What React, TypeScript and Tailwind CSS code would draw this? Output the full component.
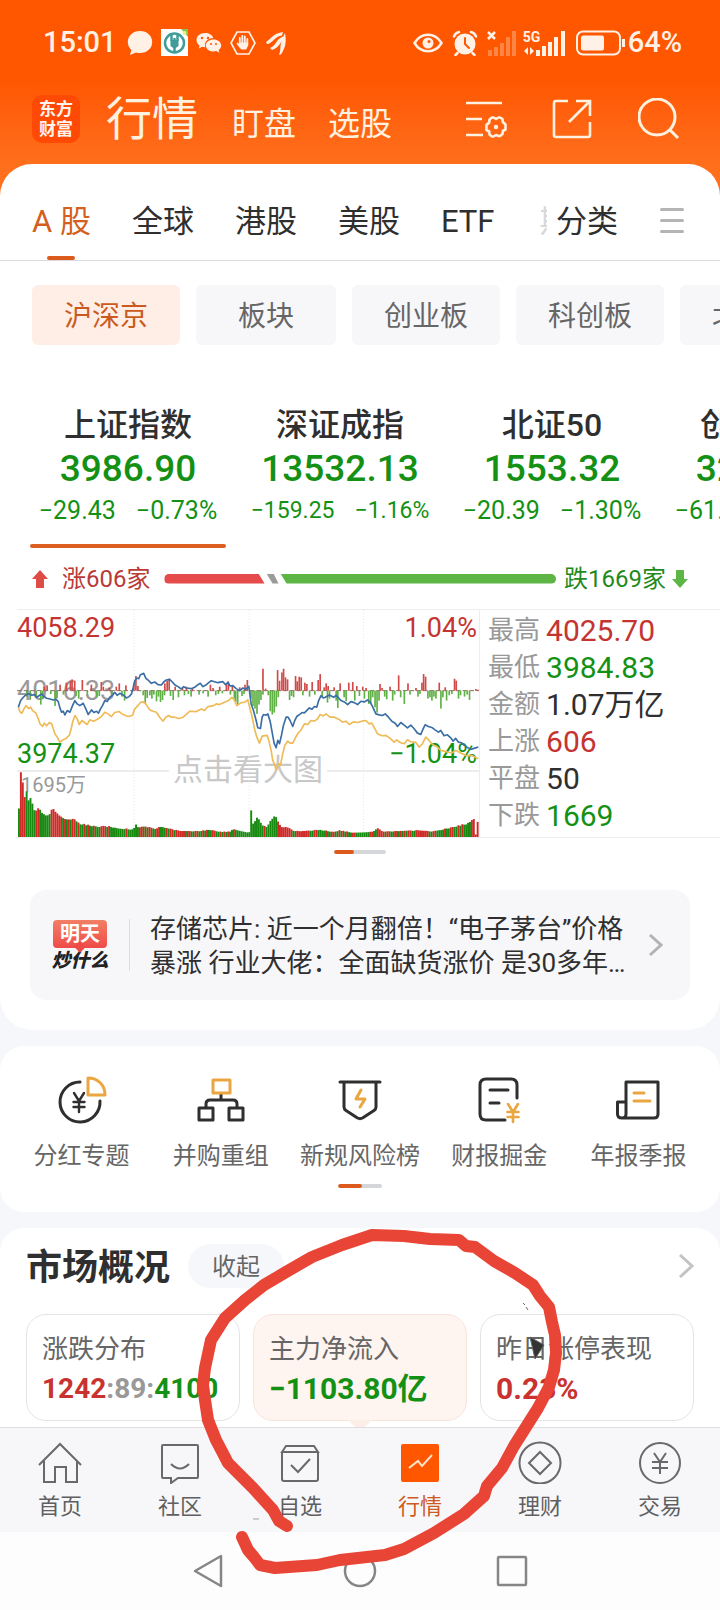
import React from 'react';
import { clsx } from 'clsx';

type Point = [number, number];

interface IndexQuote {
  name: string;
  value: string;
  change: string;
  percent: string;
}

const tabs = ['A 股', '全球', '港股', '美股', 'ETF'];
const boards = ['沪深京', '板块', '创业板', '科创板', '北交所'];

const indexes: IndexQuote[] = [
  { name: '上证指数', value: '3986.90', change: '−29.43', percent: '−0.73%' },
  { name: '深证成指', value: '13532.13', change: '−159.25', percent: '−1.16%' },
  { name: '北证50', value: '1553.32', change: '−20.39', percent: '−1.30%' },
  { name: '创业板指', value: '3263.02', change: '−61.22', percent: '−1.84%' },
];

const stats = [
  { label: '最高', value: '4025.70', color: 'text-[#c43431]' },
  { label: '最低', value: '3984.83', color: 'text-[#149114]' },
  { label: '金额', value: '1.07万亿', color: 'text-[#2f2f2f]' },
  { label: '上涨', value: '606', color: 'text-[#c43431]' },
  { label: '平盘', value: '50', color: 'text-[#2f2f2f]' },
  { label: '下跌', value: '1669', color: 'text-[#149114]' },
];

// Chart space: x 51..1440, y 27..711
const priceLine =
  '55,320 62,300 70,290 75,285 85,279 95,284 103,282 110,290 125,280 133,288 140,293 150,295 160,298 168,296 175,303 180,322 185,335 190,332 195,343 202,330 210,335 218,315 225,300 232,310 240,315 250,308 258,325 265,342 275,328 282,336 290,332 296,338 302,325 308,315 315,300 322,303 330,290 338,284 345,275 352,284 360,278 370,283 380,292 388,288 395,280 400,262 405,240 412,232 417,234 422,222 432,218 438,232 445,238 455,248 465,244 475,252 485,253 492,244 500,238 510,236 518,244 525,252 535,258 545,265 552,258 560,262 575,264 585,260 595,252 602,248 610,258 620,252 635,240 645,243 655,246 670,243 678,252 685,245 692,256 700,255 710,264 720,270 730,262 738,266 748,257 755,310 762,330 770,360 775,382 783,384 788,350 792,342 800,344 805,340 812,362 818,395 824,428 830,442 835,420 840,430 846,405 852,375 860,350 866,350 872,360 880,378 886,360 892,348 900,342 908,336 915,337 922,330 930,322 938,326 945,318 952,320 958,300 965,285 972,292 978,290 990,283 1003,290 1010,284 1018,292 1025,300 1035,304 1045,312 1055,303 1065,306 1075,312 1085,302 1095,304 1105,298 1113,305 1120,318 1130,340 1140,343 1150,345 1158,340 1168,350 1178,362 1188,368 1195,378 1205,366 1215,374 1225,382 1235,374 1245,385 1255,398 1265,402 1272,385 1278,373 1288,378 1300,382 1308,388 1318,395 1325,390 1335,406 1345,403 1355,412 1362,422 1370,414 1378,425 1388,427 1395,434 1405,441 1415,447 1425,444 1438,440';
const averageLine =
  '55,320 60,334 66,338 72,325 78,315 86,324 92,320 98,330 108,338 115,355 120,370 128,378 133,368 140,376 148,366 155,370 165,400 172,410 180,425 190,418 198,414 208,405 214,385 218,365 225,345 232,355 238,372 246,360 254,366 262,372 270,358 282,362 295,355 305,348 315,335 325,340 335,348 345,336 358,333 370,342 385,348 398,345 405,325 415,315 423,305 432,304 440,312 450,328 460,332 470,335 480,350 490,362 498,350 507,345 515,350 525,350 538,354 550,350 562,340 570,332 590,333 605,325 615,330 625,318 640,316 650,310 660,312 675,305 687,300 697,290 705,300 712,315 725,306 735,305 745,298 750,318 757,345 765,385 772,410 780,428 788,407 803,405 808,420 815,450 820,480 826,495 830,508 838,490 843,495 850,460 856,435 865,422 872,428 880,428 888,412 895,400 905,388 915,370 925,372 935,360 945,362 955,355 962,342 972,346 980,340 992,350 1005,350 1018,356 1030,365 1040,362 1050,372 1062,364 1075,366 1088,362 1100,360 1110,370 1118,368 1127,385 1135,400 1148,406 1160,405 1172,413 1185,425 1193,418 1202,426 1215,430 1225,418 1235,424 1250,426 1260,440 1270,430 1280,410 1290,420 1300,432 1315,440 1325,450 1345,455 1358,458 1370,450 1385,458 1400,465 1420,466 1438,475';

const volumeShape: Point[] = [
  [55, 70], [61, 198], [67, 165], [73, 122], [80, 140], [86, 108], [92, 116], [100, 88], [108, 76], [115, 88],
  [130, 70], [145, 65], [158, 88], [166, 72], [180, 62], [195, 54], [222, 52], [240, 40], [290, 32], [330, 32],
  [350, 27], [400, 23], [408, 40], [416, 28], [432, 32], [470, 25], [480, 32], [510, 25], [540, 18], [600, 18],
  [630, 22], [660, 16], [690, 16], [698, 24], [745, 14], [750, 16], [753, 88], [760, 40], [772, 62], [786, 36],
  [803, 30], [812, 48], [825, 68], [836, 44], [846, 30], [862, 30], [880, 20], [900, 17], [962, 22], [1000, 15],
  [1020, 20], [1060, 13], [1120, 16], [1133, 27], [1150, 16], [1250, 20], [1300, 17], [1350, 27], [1400, 40],
  [1424, 54], [1428, 8], [1433, 8], [1437, 84],
];

const upBars: Point[] = [
  [132, 12], [141, 16], [180, 18], [199, 24], [211, 30], [216, 34], [224, 30], [247, 32], [274, 18], [304, 26],
  [310, 12], [328, 10], [349, 12], [358, 22], [378, 16], [402, 22], [408, 44], [414, 14], [495, 22], [502, 30],
  [508, 36], [526, 12], [548, 8], [560, 12], [578, 6], [632, 18], [640, 8], [660, 12], [680, 20], [686, 28],
  [698, 16], [720, 10], [736, 18], [743, 32], [790, 66], [798, 6], [834, 62], [840, 30], [847, 55], [852, 66],
  [858, 40], [864, 34], [888, 44], [893, 28], [899, 42], [905, 40], [916, 24], [922, 20], [938, 26], [956, 32],
  [962, 50], [974, 10], [980, 22], [986, 14], [1004, 10], [1022, 22], [1048, 24], [1060, 26], [1072, 14],
  [1090, 12], [1100, 8], [1142, 20], [1148, 8], [1172, 12], [1198, 46], [1226, 22], [1250, 8], [1268, 24],
  [1273, 50], [1279, 42], [1320, 24], [1338, 10], [1366, 36], [1371, 30], [1430, 5], [1436, 3],
];

const downBars: Point[] = [
  [80, 18], [90, 28], [108, 16], [122, 42], [128, 24], [152, 10], [165, 46], [171, 22], [190, 12], [228, 16],
  [236, 24], [262, 14], [290, 20], [298, 16], [335, 12], [366, 18], [374, 30], [430, 14], [436, 38], [442, 22],
  [450, 14], [456, 24], [462, 12], [470, 32], [476, 18], [482, 34], [488, 28], [494, 14], [512, 16], [520, 28],
  [536, 20], [554, 14], [566, 10], [574, 18], [598, 12], [610, 8], [625, 18], [648, 14], [656, 10], [668, 8],
  [692, 12], [704, 24], [708, 34], [714, 42], [727, 16], [733, 10], [754, 24], [760, 46], [766, 54], [772, 70],
  [778, 42], [784, 28], [790, 12], [806, 14], [812, 62], [818, 72], [824, 66], [830, 48], [836, 20], [870, 28],
  [876, 16], [882, 20], [910, 14], [930, 18], [946, 12], [968, 20], [984, 36], [990, 24], [1010, 30], [1015, 52],
  [1034, 20], [1040, 32], [1066, 30], [1080, 16], [1095, 24], [1108, 40], [1114, 36], [1120, 20], [1127, 50],
  [1133, 66], [1139, 30], [1156, 18], [1162, 26], [1180, 30], [1186, 12], [1204, 20], [1215, 40], [1232, 12],
  [1256, 18], [1262, 10], [1286, 24], [1292, 20], [1298, 30], [1304, 18], [1310, 24], [1325, 54], [1331, 20],
  [1342, 30], [1350, 14], [1358, 10], [1378, 24], [1384, 14], [1396, 18], [1404, 12], [1411, 28],
];

function volumeAt(x: number) {
  const next = volumeShape.findIndex(([px]) => px >= x);
  if (next <= 0) return volumeShape[0][1];
  const [x0, y0] = volumeShape[next - 1];
  const [x1, y1] = volumeShape[next];
  return y0 + ((y1 - y0) * (x - x0)) / (x1 - x0);
}

const volumeBars = Array.from({ length: 240 }, (_, i) => {
  const x = 56 + i * 5.77;
  const noise = (i * 7919 + ((i * i) % 31) * 13) % 17;
  let red = noise > 8;
  if (x > 58 && x < 78) red = true;
  if (x > 78 && x < 102) red = false;
  if (x > 750 && x < 785) red = false;
  if (x > 805 && x < 832) red = false;
  if (x > 835 && x < 866) red = true;
  if (x > 1418) red = true;
  return { x, height: volumeAt(x) * (0.94 + noise / 150), red };
}).filter((bar) => bar.x < 1439);

function StatusBar() {
  return (
    <div className="flex h-[84px] items-center justify-between pl-[43px] pr-[38px] pt-px text-[29px] font-medium text-[#fff1e6]">
      <div className="flex items-center gap-2">
        <span className="mr-[2px]">15:01</span>
        <svg className="h-[26px] w-[26px]" viewBox="0 0 26 26" fill="currentColor">
          <path d="M13 1C6 1 .8 5.700.8 12c0 3.300 1.400 6 3.600 8L3 25l6-2.500c1.200.4 2.600.5 4 .5 7 0 12.200-4.700 12.200-11S20 1 13 1z" />
        </svg>
        <svg className="h-[27px] w-[27px]" viewBox="0 0 27 27">
          <path fill="#fff" d="M0 0h27v27H0z" />
          <circle cx="13.500" cy="14" r="9.500" fill="none" stroke="#3f9c98" strokeWidth="2.500" />
          <path d="M10.500 4v8M16.500 4v8M13.500 9v14" fill="none" stroke="#3f9c98" strokeWidth="2.500" />
          <path d="M9.500 11h8v6l-4 3-4-3z" fill="#3f9c98" />
          <path d="M20 0h7v8z" fill="#8bc34a" />
          <circle cx="23.500" cy="4" r="2" fill="#e8f28a" />
        </svg>
        <svg className="h-[26px] w-[26px]" viewBox="0 0 26 26" fill="currentColor">
          <path d="M9 3C4 3 .5 6 .5 10c0 2.300 1.200 4.200 3 5.500L3 18.500l3-1.700c1 .3 2 .4 3.200.4C8 11.500 12 8 17.300 8 16.500 5 13 3 9 3z" />
          <path d="M17.500 9.500c-4.300 0-7.700 2.600-7.700 6s3.400 6 7.700 6c1 0 2-.1 2.800-.4l3 1.600-.7-2.600c1.600-1.100 2.600-2.700 2.600-4.600 0-3.400-3.400-6-7.700-6z" />
          <g fill="#ff5600">
            <circle cx="6" cy="8" r="1.200" />
            <circle cx="12" cy="8" r="1.200" />
            <circle cx="15" cy="14" r="1" />
            <circle cx="20" cy="14" r="1" />
          </g>
        </svg>
        <svg className="h-[26px] w-[26px]" viewBox="0 0 26 26" fill="none" stroke="currentColor">
          <path d="M7 2h12l6 11-6 11H7L1 13z" strokeWidth="1.700" />
          <path d="M9.800 14V8M12.300 13V6M14.800 13V6.500M17.300 14V9M7.500 13.500l3 4" strokeWidth="1.800" strokeLinecap="round" />
          <path d="M9 12.500h9.200v3l-2 4h-5l-2.200-4z" fill="currentColor" stroke="none" />
        </svg>
        <svg className="h-[26px] w-[26px]" viewBox="0 0 26 26" fill="currentColor">
          <path d="M2 12C6 10 9 3 19 2l-1 3.500C11 6 8 14 3 14z" />
          <path d="M6 18c6-2 6-9 13-11.500l1 3.500c-5 3-5 8-12 10z" />
          <path d="M15 24.500c3-6-1-8 6-21.500 1.500 8 1 14-4 21.500z" />
        </svg>
      </div>
      <div className="flex items-center gap-[9px]">
        <svg className="h-5 w-[30px]" viewBox="0 0 30 20" fill="none" stroke="currentColor">
          <path d="M1.500 10C8-1 22-1 28.500 10 22 21 8 21 1.500 10z" strokeWidth="2.500" />
          <circle cx="15" cy="10" r="5.500" fill="currentColor" stroke="none" />
          <circle cx="16" cy="8.500" r="1.500" fill="#ff5600" stroke="none" />
        </svg>
        <svg className="h-[26px] w-[26px]" viewBox="0 0 26 26" fill="none" stroke="currentColor" strokeLinecap="round">
          <circle cx="13" cy="14" r="10.500" fill="currentColor" stroke="none" />
          <path d="M2 6.500C3 4 5 2.500 7 2M24 6.500C23 4 21 2.500 19 2M5.500 23l-2 2M20.500 23l2 2" strokeWidth="2.500" />
          <path d="M13 8v6l4 4" stroke="#ff5600" strokeWidth="2" />
        </svg>
        <svg className="h-[26px] w-[30px]" viewBox="0 0 30 26" fill="currentColor">
          <path d="M1 2l7 7M8 2L1 9" stroke="currentColor" strokeWidth="2.500" />
          <path opacity=".3" d="M1 20h4v6H1zM7 17h4v9H7zM13 13h4v13h-4zM19 7h4v19h-4zM25 1h4v25h-4z" />
        </svg>
        <span className="relative -ml-[3px] block h-[26px] w-[43px]">
          <svg className="h-full w-full" viewBox="0 0 43 26" fill="currentColor">
            <path d="M5 17v8l-4-4zM7 25v-8l4 4zM13 20h4v6h-4zM19 16h4v10h-4zM25 12h4v14h-4zM31 7h4v19h-4zM38 1h4v25h-4z" />
          </svg>
          <span className="absolute left-0 top-0 text-[14px] font-bold leading-[14px]">5G</span>
        </span>
        <svg className="h-[26px] w-[51px]" viewBox="0 0 51 26" fill="none" stroke="currentColor">
          <rect x="2" y="1.500" width="43" height="23" rx="6" strokeWidth="2" />
          <rect x="6" y="5.500" width="23" height="15" rx="2" fill="currentColor" stroke="none" />
          <path d="M48.500 9v8" strokeWidth="3" />
        </svg>
        <span className="-ml-[7px]">64%</span>
      </div>
    </div>
  );
}

function Header() {
  return (
    <header className="h-[196px] bg-linear-to-b from-[#ff5600] from-40% to-[#ff6f1c] to-85%">
      <StatusBar />
      <div className="flex h-[70px] items-center justify-between pl-8 pr-10 text-[#fff1e0]">
        <div className="flex items-center">
          <div className="flex h-12 w-12 flex-col items-center justify-center rounded-[10px] bg-[#ff4a05] text-[17px] font-bold leading-5 text-[#fff4ec]">
            <span>东方</span>
            <span>财富</span>
          </div>
          <nav className="ml-[26px] flex items-baseline pt-[5px] leading-[60px]">
            <a href="#quotes" className="mr-[34px] text-[46px]">行情</a>
            <a href="#watch" className="mr-8 text-[32px]">盯盘</a>
            <a href="#pick" className="text-[32px]">选股</a>
          </nav>
        </div>
        <div className="flex items-center gap-11">
          <button type="button" aria-label="设置">
            <svg className="block h-[42px] w-[42px]" viewBox="0 0 42 42" fill="none" stroke="currentColor" strokeWidth="2.600">
              <path d="M0 5h36M0 21h16M0 37h17" />
              <path
                d="M26 19.500h1.500l2.500 1.500 2.500-1.500H34l2.500 1.500.3 3 2.700 2.500v5l-2.700 1.500-.3 3-2.500 2h-1.500L30 37l-2.500 1.500H26l-2.500-2-.3-3-2.700-1.500v-5l2.700-2.500.3-3z"
                strokeLinejoin="round"
              />
              <circle cx="30" cy="29" r="2.200" fill="currentColor" stroke="none" />
            </svg>
          </button>
          <button type="button" aria-label="分享">
            <svg className="block h-[42px] w-[42px]" viewBox="0 0 42 42" fill="none" stroke="currentColor" strokeWidth="2.600">
              <path d="M16 3H4q-2 0-2 2v32q0 2 2 2h32q2 0 2-2V24M38 18V3H24M38 3L17 24" />
            </svg>
          </button>
          <button type="button" aria-label="搜索">
            <svg className="block h-[42px] w-[42px]" viewBox="0 0 42 42" fill="none" stroke="currentColor" strokeWidth="3">
              <circle cx="19" cy="19" r="18" />
              <path d="M31 31l9 9" />
            </svg>
          </button>
        </div>
      </div>
    </header>
  );
}

function Tabs() {
  return (
    <div className="flex h-[97px] items-stretch border-b border-[#dcdcde] pl-8 pr-9 pt-5 text-[31px] text-[#2f2f2f]">
      <div className="flex min-w-0 flex-1 gap-[41px] overflow-hidden">
        {tabs.map((tab, i) => (
          <button
            key={tab}
            type="button"
            className={clsx('relative shrink-0 whitespace-nowrap', i === 0 && 'text-[#d4601f]')}
          >
            {tab}
            {i === 0 && <span className="absolute bottom-0 left-1/2 h-1 w-7 -translate-x-1/2 rounded-full bg-[#dc5b1c]" />}
          </button>
        ))}
        <button type="button" className="ml-1 w-2 shrink-0 overflow-hidden whitespace-nowrap text-left text-[#d8d8d8]">期</button>
      </div>
      <button type="button" className="whitespace-nowrap">分类</button>
      <button type="button" aria-label="更多" className="ml-[42px] flex flex-col justify-center gap-2 pb-1">
        <span className="h-[3px] w-6 rounded-full bg-[#b4b4b4]" />
        <span className="h-[3px] w-6 rounded-full bg-[#b4b4b4]" />
        <span className="h-[3px] w-6 rounded-full bg-[#b4b4b4]" />
      </button>
    </div>
  );
}

function Pager({ wide }: { wide?: boolean }) {
  return (
    <div className={clsx('mx-auto flex h-1 overflow-hidden rounded-full bg-[#d5d6da]', wide ? 'w-[52px]' : 'w-11')}>
      <span className={clsx('rounded-full bg-[#dc5b1c]', wide ? 'w-5' : 'w-6')} />
    </div>
  );
}

function Breadth() {
  return (
    <div className="flex h-[61px] items-center px-8 text-[24px]">
      <svg className="h-[18px] w-4" viewBox="0 0 16 18" fill="#dd4c45">
        <path d="M8 0l8 9h-4v9H4V9H0z" />
      </svg>
      <span className="ml-[14px] text-[#b93a37]">涨606家</span>
      <div className="ml-[14px] mr-2 flex h-[10px] flex-1 gap-[2px]">
        <span className="flex-[606] rounded-l-full bg-[#e54b4b] [clip-path:polygon(0_0,calc(100%-6px)_0,100%_100%,0_100%)]" />
        <span className="w-3 bg-[#9b9b9b] [clip-path:polygon(0_0,7px_0,100%_100%,6px_100%)]" />
        <span className="flex-[1669] rounded-r-full bg-[#5cb544] [clip-path:polygon(0_0,100%_0,100%_100%,6px_100%)]" />
      </div>
      <span className="mr-[6px] text-[#1f8a1c]">跌1669家</span>
      <svg className="h-[18px] w-4" viewBox="0 0 16 18" fill="#5cb544">
        <path d="M8 18L0 9h4V0h8v9h4z" />
      </svg>
    </div>
  );
}

function TrendChart() {
  return (
    <div className="relative min-w-0 flex-1 border-r border-[#ededf0] text-[27px] leading-8">
      <span className="absolute left-0 top-[2px] text-[#c43431]">4058.29</span>
      <span className="absolute right-[2px] top-[2px] text-[#c43431]">1.04%</span>
      <span className="absolute left-0 top-[65px] text-[#9a9a9a]">4016.33</span>
      <span className="absolute left-0 top-32 text-[#149114]">3974.37</span>
      <span className="absolute right-[2px] top-32 text-[#149114]">−1.04%</span>
      <span className="absolute inset-x-0 top-[160px] h-[2px] bg-[#ededf0]" />
      <span className="absolute left-1 top-[159px] text-[20px] text-[#999]">1695万</span>
      <span className="absolute left-1/2 top-36 -translate-x-1/2 whitespace-nowrap bg-white px-1 text-[30px] text-[#c8c8c8]">点击看大图</span>
      <svg className="absolute inset-0 h-full w-full" viewBox="51 27 1389 684" preserveAspectRatio="none" fill="none">
        <path d="M403 27V711M749 27V711M1093 27V711" stroke="#e6e6ea" strokeWidth="3" strokeDasharray="3 6" />
        <path d="M51 270H1440" stroke="#8a6a5a" strokeWidth="3" strokeDasharray="14 6" />
        {upBars.map(([x, h]) => (
          <rect key={x} x={x - 2} y={270 - h} width="5" height={h} fill="#cf4a48" />
        ))}
        {downBars.map(([x, h]) => (
          <rect key={x} x={x - 2} y={270} width="5" height={h} fill="#5fb045" />
        ))}
        {volumeBars.map(({ x, height, red }) => (
          <rect key={x} x={x - 2} y={711 - height} width="5.770" height={height} fill={red ? '#cf2a26' : '#178a12'} />
        ))}
        <polyline points={averageLine} stroke="#eebb57" strokeWidth="5" strokeLinejoin="round" />
        <polyline points={priceLine} stroke="#3a6ea5" strokeWidth="5" strokeLinejoin="round" />
      </svg>
    </div>
  );
}

function NewsCard() {
  return (
    <a href="#news" className="mx-[30px] mt-9 flex h-[110px] items-center rounded-2xl bg-[#f7f7fa] pl-[21px] pr-[26px]">
      <div className="flex w-[58px] flex-col items-center">
        <div className="relative flex h-7 w-[54px] items-center justify-center rounded-[4px] bg-linear-to-b from-[#f27e66] to-[#ee4a48] text-[20px] font-bold text-white">
          明天
          <span className="absolute -bottom-[3px] left-1/2 h-2 w-2 -translate-x-1/2 rotate-45 bg-[#ee4a48]" />
        </div>
        <span className="mt-[3px] whitespace-nowrap text-[19px] font-black italic leading-5 text-[#222]">炒什么</span>
      </div>
      <span className="ml-5 h-[52px] w-px bg-[#dcdce0]" />
      <p className="ml-5 min-w-0 flex-1 whitespace-nowrap pt-[2px] text-[26px] leading-[34px] text-[#2f2f2f]">
        存储芯片: 近一个月翻倍！“电子茅台”价格
        <br />
        暴涨 行业大佬：全面缺货涨价 是30多年…
      </p>
      <svg className="ml-3 h-6 w-4" viewBox="0 0 16 24" fill="none" stroke="#b3b3b6" strokeWidth="3">
        <path d="M2 2l11 10L2 22" />
      </svg>
    </a>
  );
}

const shortcuts = [
  {
    label: '分红专题',
    icon: (
      <>
        <path d="M22 8A20 20 0 1 0 42 27" />
        <path d="M16 19l5 8 5-8M21 27v11M15.500 28h11M15.500 33h11" strokeWidth="2.400" />
        <path d="M30 4v17h17C47 11 40 4 30 4z" stroke="#eaa640" />
      </>
    ),
  },
  {
    label: '并购重组',
    icon: (
      <>
        <path d="M24 20v6M9 33v-3q0-4 4-4h23q4 0 4 4v3M2 34h14v12H2zM32 34h14v12H32z" strokeLinecap="butt" />
        <path d="M16 6h17v13H16z" stroke="#eaa640" />
      </>
    ),
  },
  {
    label: '新规风险榜',
    icon: (
      <>
        <path d="M4 8h40M8 8v25q0 2 2 3.500l11.500 7.500q2.500 1.300 5 0L38 36.500q2-1.500 2-3.500V8" />
        <path d="M25 16l-5 9h9l-5 8" stroke="#eaa640" />
      </>
    ),
  },
  {
    label: '财报掘金',
    icon: (
      <>
        <path d="M42 24V11q0-6-6-6H11q-6 0-6 6v29q0 6 6 6h19M15 16h18M15 29h9" />
        <path d="M33 30l5 8 5-8M38 38v10M32.500 38h11M32.500 43h11" stroke="#eaa640" strokeWidth="2.600" />
      </>
    ),
  },
  {
    label: '年报季报',
    icon: (
      <>
        <path d="M12 40V8h32v32q0 4-4 4H8q-4.500 0-4.500-4V28H12v12q0 4-4 4" />
        <path d="M20 19h10M20 27h16" stroke="#eaa640" />
      </>
    ),
  },
];

function Shortcuts() {
  return (
    <section className="mt-4 rounded-[24px] bg-white px-3 pb-6 pt-7">
      <div className="grid grid-cols-5">
        {shortcuts.map(({ label, icon }) => (
          <a key={label} href="#topic" className="flex flex-col items-center gap-[18px] text-[24px] leading-8 text-[#666]">
            <svg className="h-12 w-12 overflow-visible" viewBox="0 0 48 48" fill="none" stroke="#2f2f2f" strokeWidth="3" strokeLinecap="round" strokeLinejoin="round">
              {icon}
            </svg>
            <span className="whitespace-nowrap">{label}</span>
          </a>
        ))}
      </div>
      <div className="mt-3">
        <Pager />
      </div>
    </section>
  );
}

function MarketOverview() {
  return (
    <section className="relative mt-4 rounded-t-[24px] bg-white px-[26px] pb-[6px] pt-4">
      <div className="flex h-11 items-center">
        <h2 className="pt-1 text-[36px] font-bold text-[#2f2f2f]">市场概况</h2>
        <button type="button" className="ml-[18px] h-11 rounded-full bg-[#f6f7fa] px-6 pt-[2px] text-[24px] text-[#666]">收起</button>
        <svg className="ml-auto h-6 w-4" viewBox="0 0 16 24" fill="none" stroke="#c4c4c6" strokeWidth="3">
          <path d="M2 1l12 11L2 23" />
        </svg>
      </div>
      <div className="mt-[26px] grid grid-cols-3 gap-[13px] text-[26px] leading-10 text-[#666]">
        <div className="h-[107px] rounded-[20px] border border-[#e4e4e6] px-[15px] pt-[14px]">
          <div>涨跌分布</div>
          <div className="whitespace-nowrap text-[28px] font-bold text-[#999]">
            <span className="text-[#c9322f]">1242</span>:89:<span className="text-[#149114]">4100</span>
          </div>
        </div>
        <div className="relative h-[107px] rounded-[20px] border border-[#f8e4da] bg-[#fef4f0] px-[15px] pt-[14px]">
          <div>主力净流入</div>
          <div className="whitespace-nowrap text-[30px] font-bold text-[#149114]">−1103.80亿</div>
          <span className="absolute -bottom-[7px] left-1/2 h-[7px] w-6 -translate-x-1/2 bg-[#fdeee8] [clip-path:polygon(0_0,100%_0,70%_100%,30%_100%)]" />
        </div>
        <div className="h-[107px] rounded-[20px] border border-[#e4e4e6] px-[15px] pt-[14px]">
          <div className="whitespace-nowrap">昨日涨停表现</div>
          <div className="text-[30px] font-bold text-[#c9322f]">0.23%</div>
        </div>
      </div>
      {/* hand-drawn marker ring */}
      <svg className="pointer-events-none absolute inset-x-0 top-0 z-10 w-full overflow-visible" viewBox="0 1228 720 350" fill="none">
        <path
          d="M287 1526L279 1521 273 1510 253 1488 228 1463 216 1440 208 1420 205 1400 203 1385 205 1368 211 1340 225 1318 245 1300 264 1285 286 1272 312 1257 342 1245 372 1235 404 1236 430 1239 459 1240 466 1246 475 1247 494 1261 515 1273 533 1285 540 1296 549 1307 552 1322 555 1335 556 1353 554 1370 549 1387 538 1408 526 1427 514 1446 502 1468 487 1486 484 1496 464 1514 434 1533 404 1549 385 1555 367 1557 340 1560 317 1565 275 1568 260 1565 254 1557 248 1550 242 1537"
          stroke="#e94536"
          strokeWidth="12"
          strokeLinecap="round"
          strokeLinejoin="round"
        />
        <path d="M530 1337l14 8-9 14zM523 1303l2 2M526 1307l2 3" fill="#333" stroke="#666" />
        <path d="M253 1519h6" stroke="#ccc" strokeWidth="2" />
      </svg>
    </section>
  );
}

const navItems = [
  { label: '首页', icon: <path d="M1 25L22 4l21 21M6 21v21h11V27h11v15h11V21" /> },
  { label: '社区', icon: <path d="M5 5h34q1 0 1 1v31q0 1-1 1H20l-7 5v-5H5q-1 0-1-1V6q0-1 1-1zM13 24q9 9 18 0" /> },
  { label: '自选', icon: <path d="M4 12v27q0 2 2 2h32q2 0 2-2V12M4 12l4-6h28l4 6zM13 25l7 7 12-13" /> },
  {
    label: '行情',
    active: true,
    icon: (
      <>
        <rect x="3" y="4" width="38" height="38" rx="2" fill="#ff5600" stroke="none" />
        <path d="M11 28l9-7 4 5 10-11" stroke="#ffe3cc" />
      </>
    ),
  },
  {
    label: '理财',
    icon: (
      <>
        <circle cx="22" cy="23" r="20.500" />
        <path d="M22 12l11 11-11 11-11-11z" />
      </>
    ),
  },
  {
    label: '交易',
    icon: (
      <>
        <circle cx="22" cy="23" r="20" />
        <path d="M16 13l6 9 6-9M22 22v12M14 22h16M14 28h16" />
      </>
    ),
  },
];

function BottomNav() {
  return (
    <nav className="grid h-[105px] grid-cols-6 border-t border-[#dedee2] bg-[#f7f7fa] pt-3">
      {navItems.map(({ label, icon, active }) => (
        <a
          key={label}
          href="#nav"
          className={clsx('flex flex-col items-center text-[22px] leading-8', active ? 'text-[#cf5a20]' : 'text-[#5f5f61]')}
        >
          <svg className="mb-[7px] h-11 w-11" viewBox="0 0 44 44" fill="none" stroke="#69696b" strokeWidth="2">
            {icon}
          </svg>
          {label}
        </a>
      ))}
    </nav>
  );
}

function SystemNav() {
  return (
    <div className="flex h-[78px] items-center justify-center gap-[118px] bg-[#fdfdfd]">
      <button type="button" aria-label="返回">
        <svg className="block h-9 w-8" viewBox="0 0 32 36" fill="none" stroke="#868688" strokeWidth="2.500" strokeLinejoin="round">
          <path d="M29 3v30L3 18z" />
        </svg>
      </button>
      <button type="button" aria-label="主屏幕">
        <svg className="block h-9 w-9" viewBox="0 0 36 36" fill="none" stroke="#868688" strokeWidth="2.500">
          <circle cx="18" cy="18" r="15" />
        </svg>
      </button>
      <button type="button" aria-label="最近任务">
        <svg className="block h-8 w-8" viewBox="0 0 32 32" fill="none" stroke="#868688" strokeWidth="2.500">
          <rect x="2" y="2" width="28" height="28" rx="1" />
        </svg>
      </button>
    </div>
  );
}

export default function App() {
  return (
    <div className="w-full overflow-hidden bg-[#f5f7fa] font-[Roboto,'Noto_Sans_CJK_SC',sans-serif]">
      <Header />
      <main>
        <section className="relative -mt-8 rounded-[32px] bg-white pb-[30px]">
          <Tabs />
          <div className="flex gap-4 overflow-hidden pl-8 pt-6">
            {boards.map((board, i) => (
              <button
                key={board}
                type="button"
                className={clsx(
                  'h-[60px] min-w-[140px] shrink-0 rounded-md px-8 pt-[3px] text-[28px]',
                  i === 0 ? 'bg-[#ffeee6] text-[#cb5a20]' : 'bg-[#f7f7fa] text-[#666]'
                )}
              >
                {board}
              </button>
            ))}
          </div>
          <div className="flex gap-4 overflow-hidden pl-[30px] pt-[58px]">
            {indexes.map((item, i) => (
              <button key={item.name} type="button" className="w-[196px] shrink-0 leading-[44px] text-[#149114]">
                <span className="block text-[32px] font-medium text-[#2f2f2f]">{item.name}</span>
                <span className="block text-[37px] font-medium">{item.value}</span>
                <span
                  className={clsx(
                    'flex justify-center gap-5 whitespace-nowrap leading-10',
                    item.change.length > 6 ? 'text-[23px]' : 'text-[25px]'
                  )}
                >
                  <span>{item.change}</span>
                  <span>{item.percent}</span>
                </span>
                <span className={clsx('mt-[13px] block h-1 rounded-full', i === 0 && 'bg-[#dc5f20]')} />
              </button>
            ))}
          </div>
          <Breadth />
          <div className="ml-[17px] flex h-[229px] border-y border-[#ededf0]">
            <TrendChart />
            <dl className="w-60 shrink-0 pl-2 pt-[2px] leading-[37px]">
              {stats.map((row) => (
                <div key={row.label} className="flex gap-[6px]">
                  <dt className="text-[26px] text-[#999]">{row.label}</dt>
                  <dd className={clsx('text-[30px]', row.color)}>{row.value}</dd>
                </div>
              ))}
            </dl>
          </div>
          <div className="pt-3">
            <Pager wide />
          </div>
          <NewsCard />
        </section>
        <Shortcuts />
        <MarketOverview />
      </main>
      <BottomNav />
      <SystemNav />
    </div>
  );
}
